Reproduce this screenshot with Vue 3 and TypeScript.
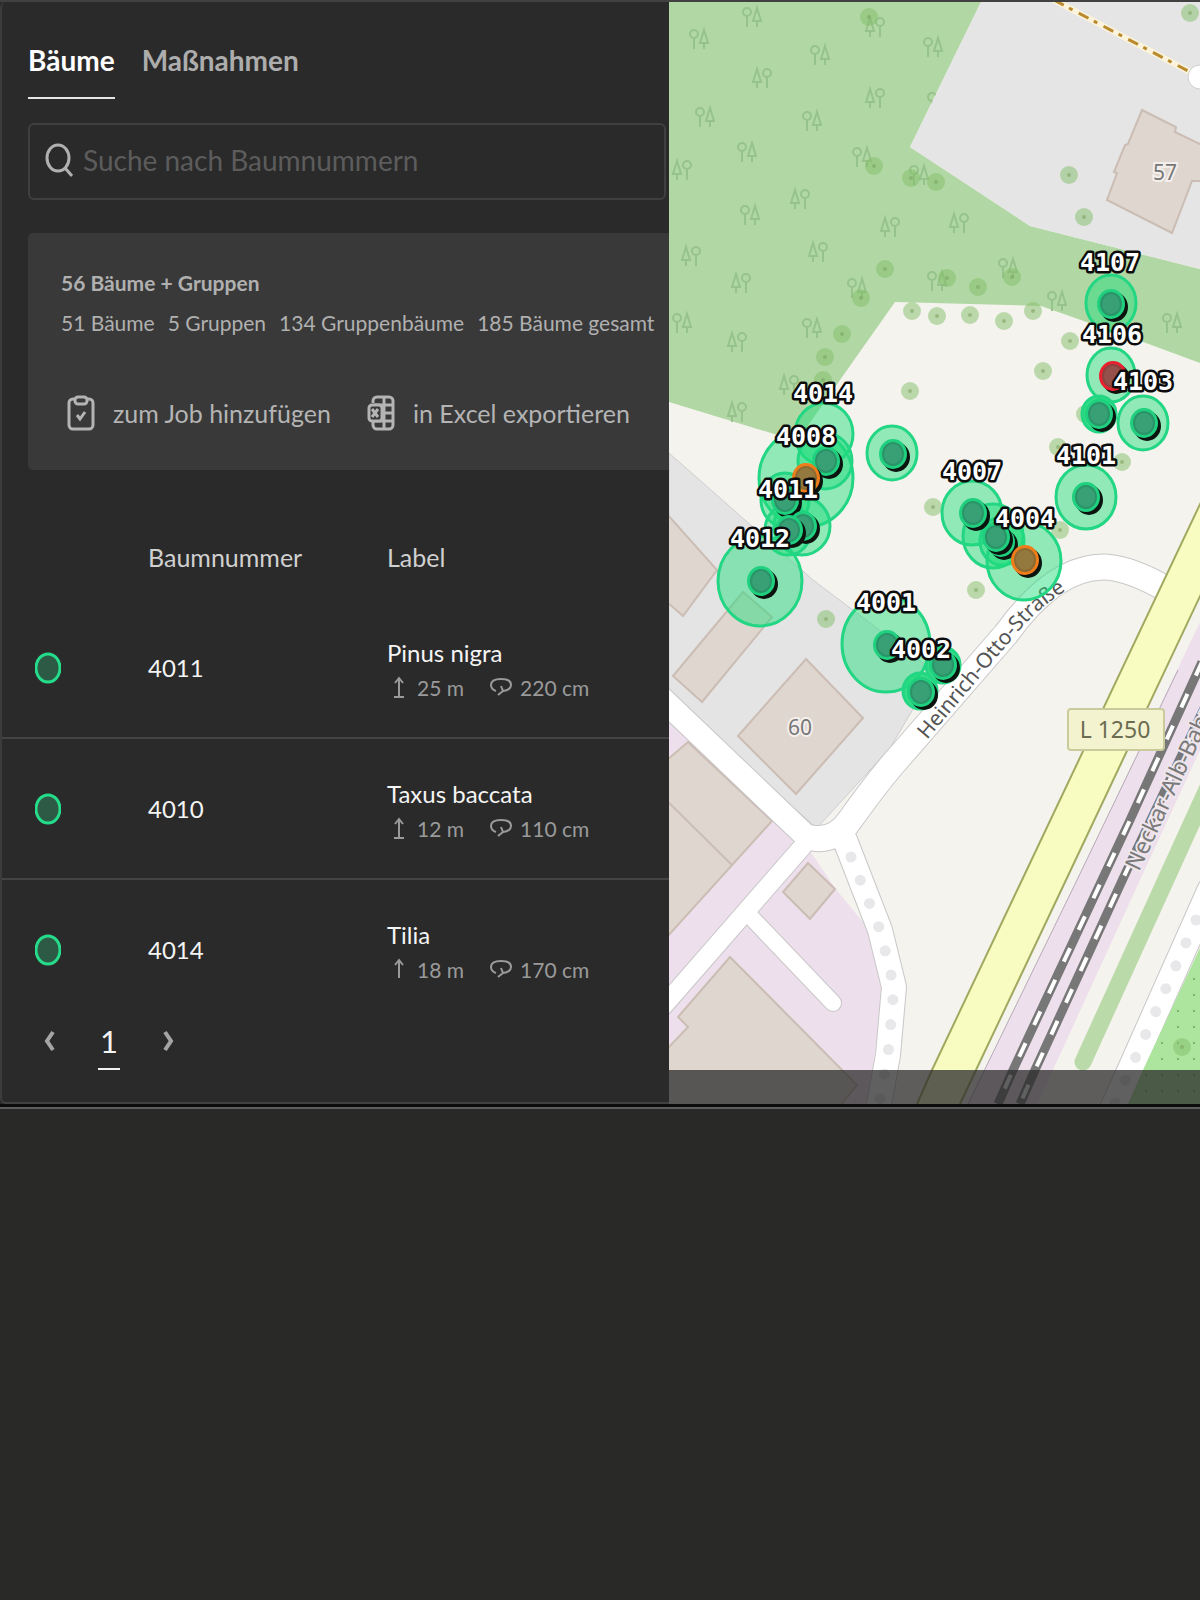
<script setup lang="ts">
import { ref } from 'vue'

interface TreeRow {
  nr: string
  label: string
  height: string
  girth: string
}

interface Crown {
  x: number
  y: number
  rx: number
  ry: number
}

const search = ref('')

const totals = ['51 Bäume', '5 Gruppen', '134 Gruppenbäume', '185 Bäume gesamt']

const rows: TreeRow[] = [
  { nr: '4011', label: 'Pinus nigra', height: '25 m', girth: '220 cm' },
  { nr: '4010', label: 'Taxus baccata', height: '12 m', girth: '110 cm' },
  { nr: '4014', label: 'Tilia', height: '18 m', girth: '170 cm' },
]

const crowns: Crown[] = [
  { x: 824, y: 434, rx: 29, ry: 31 },
  { x: 806, y: 478, rx: 47, ry: 49 },
  { x: 825, y: 461, rx: 27, ry: 28 },
  { x: 785, y: 500, rx: 24, ry: 27 },
  { x: 802, y: 526, rx: 28, ry: 29 },
  { x: 788, y: 530, rx: 23, ry: 25 },
  { x: 760, y: 581, rx: 42, ry: 45 },
  { x: 892, y: 453, rx: 25, ry: 27 },
  { x: 972, y: 513, rx: 30, ry: 32 },
  { x: 993, y: 536, rx: 30, ry: 32 },
  { x: 1002, y: 541, rx: 22, ry: 24 },
  { x: 1024, y: 561, rx: 37, ry: 39 },
  { x: 1086, y: 497, rx: 30, ry: 32 },
  { x: 1111, y: 375, rx: 24, ry: 27 },
  { x: 1143, y: 423, rx: 25, ry: 27 },
  { x: 1099, y: 414, rx: 17, ry: 18 },
  { x: 1111, y: 303, rx: 25, ry: 28 },
  { x: 886, y: 644, rx: 44, ry: 48 },
  { x: 943, y: 665, rx: 17, ry: 18 },
  { x: 920, y: 691, rx: 17, ry: 18 },
]

const trunks: [number, number, string][] = [
  [826, 461, 'ok'], [806, 478, 'warn'], [785, 500, 'ok'], [803, 526, 'ok'], [789, 530, 'ok'],
  [761, 581, 'ok'], [893, 454, 'ok'], [973, 513, 'ok'], [1001, 542, 'ok'], [996, 537, 'ok'],
  [1025, 560, 'warn'], [1086, 497, 'ok'], [1113, 376, 'danger'], [1144, 423, 'ok'],
  [1099, 414, 'ok'], [1111, 304, 'ok'], [887, 645, 'ok'], [943, 665, 'ok'], [921, 692, 'ok'],
]

const labels: [number, number, string][] = [
  [823, 402, '4014'], [806, 445, '4008'], [788, 498, '4011'], [760, 547, '4012'],
  [886, 611, '4001'], [921, 658, '4002'], [972, 480, '4007'], [1025, 527, '4004'],
  [1086, 464, '4101'], [1143, 390, '4103'], [1112, 343, '4106'], [1110, 271, '4107'],
]

const bushes: [number, number][] = [
  [869, 17], [1190, 13], [1069, 175], [1084, 217], [874, 166], [911, 178], [936, 182], [885, 269],
  [947, 278], [978, 287], [1012, 277], [861, 298], [842, 334], [825, 357], [823, 380], [912, 311],
  [937, 316], [970, 315], [1004, 321], [1033, 311], [1070, 341], [1043, 371], [910, 391],
  [1058, 447], [1122, 462], [1085, 414], [933, 507], [1060, 530], [976, 590], [826, 619],
  [1182, 1047],
]

const roundFirst: [number, number][] = [
  [752, 17], [699, 39], [933, 47], [820, 55], [705, 117], [812, 121], [747, 152], [862, 157],
  [919, 175], [750, 215], [857, 288], [937, 281], [1008, 268], [1057, 301], [682, 323],
  [812, 328], [1172, 323], [937, 102],
]

const coneFirst: [number, number][] = [
  [875, 27], [762, 78], [875, 98], [682, 170], [800, 199], [890, 227], [959, 223], [691, 256],
  [818, 252], [741, 283], [737, 342], [789, 385], [737, 412],
]
</script>

<template>
  <div class="page">
    <main class="frame">
      <section class="panel">
        <nav class="tabs">
          <a href="#baeume" class="tab active">Bäume</a>
          <a href="#massnahmen" class="tab">Maßnahmen</a>
        </nav>

        <label class="search">
          <svg class="search-icon" viewBox="0 0 28 34" aria-hidden="true">
            <ellipse cx="13" cy="15" rx="11" ry="13" />
            <path d="M20 25l7 8" />
          </svg>
          <input v-model="search" type="text" placeholder="Suche nach Baumnummern" aria-label="Suche nach Baumnummern" />
        </label>

        <div class="card">
          <p class="card-title">56 Bäume + Gruppen</p>
          <p class="totals">
            <span v-for="t in totals" :key="t">{{ t }}</span>
          </p>
          <div class="actions">
            <button type="button">
              <svg viewBox="0 0 28 36" aria-hidden="true">
                <path d="M8 4H6a4 4 0 0 0-4 4v22a4 4 0 0 0 4 4h16a4 4 0 0 0 4-4V8a4 4 0 0 0-4-4h-2" />
                <rect x="8" y="2" width="12" height="7" rx="3" />
                <path d="M10 20l3 4 5-7" />
              </svg>
              zum Job hinzufügen
            </button>
            <button type="button">
              <svg viewBox="0 0 28 36" aria-hidden="true">
                <path d="M6 8V6a4 4 0 0 1 4-4h12a4 4 0 0 1 4 4v24a4 4 0 0 1-4 4H10a4 4 0 0 1-4-4v-3" />
                <path d="M17 2v32M7 10h19M15 18h11M7 26h19" />
                <rect class="sheet" x="2" y="10" width="13" height="16" rx="3" />
                <path d="M5 14l6 8M11 14l-6 8" />
              </svg>
              in Excel exportieren
            </button>
          </div>
        </div>

        <div class="scroller">
          <table>
            <thead>
              <tr>
                <th class="state"></th>
                <th class="nr">Baumnummer</th>
                <th>Label</th>
              </tr>
            </thead>
            <tbody>
              <tr v-for="row in rows" :key="row.nr">
                <td class="state">
                  <svg class="dot" viewBox="0 0 26 32" aria-hidden="true">
                    <ellipse cx="13" cy="16" rx="12" ry="14" />
                  </svg>
                </td>
                <td class="nr">{{ row.nr }}</td>
                <td>
                  <div class="species">{{ row.label }}</div>
                  <div class="sizes">
                    <span class="size">
                      <svg class="arrow" viewBox="0 0 14 22" aria-hidden="true">
                        <path d="M7 20V2M3 7l4-5 4 5M2 21h10" />
                      </svg>
                      {{ row.height }}
                    </span>
                    <span class="size">
                      <svg class="girth" viewBox="0 0 22 20" aria-hidden="true">
                        <path d="M6 14C3 13 1 11 1 8c0-4 4-6 10-6s10 2 10 6c0 3-3 6-9 6" />
                        <path d="M11 9l2 5-5 4" />
                      </svg>
                      {{ row.girth }}
                    </span>
                  </div>
                </td>
              </tr>
            </tbody>
          </table>
        </div>

        <nav class="pager" aria-label="Seiten">
          <button type="button" aria-label="Zurück">
            <svg viewBox="0 0 12 22" aria-hidden="true"><path d="M9 2L3 11l6 9" /></svg>
          </button>
          <a href="#seite-1" class="current">1</a>
          <button type="button" aria-label="Weiter">
            <svg viewBox="0 0 12 22" aria-hidden="true"><path d="M3 2l6 9-6 9" /></svg>
          </button>
        </nav>
      </section>

      <section class="map">
        <svg viewBox="669 2 531 1102" preserveAspectRatio="xMidYMid slice" role="img" aria-label="Karte">
          <defs>
            <g id="round"><circle cx="0" cy="-5" r="4" /><path d="M0-1V10" /></g>
            <g id="cone"><path d="M0-9l-4 13h8zM0 4v6" /></g>
            <pattern id="meadow" x="1177" y="1010" width="16" height="16" patternUnits="userSpaceOnUse">
              <circle cx="1" cy="1" r="1" fill="#6ba560" />
            </pattern>
            <path id="street" d="M927 740L1012 639Q1035 610 1068 589" />
          </defs>

          <rect x="669" y="0" width="531" height="1104" fill="#f5f3ee" />

          <!-- wood -->
          <path fill="#b1d8a4" d="M669 0H982L910 147 1030 226 1200 269V363L1146 343 1041 306 895 302 797 441 669 402z" />
          <g class="wood">
            <g v-for="p in roundFirst" :key="`r${p}`" :transform="`translate(${p[0]} ${p[1]})`">
              <use href="#round" x="-5" /><use href="#cone" x="5" />
            </g>
            <g v-for="p in coneFirst" :key="`c${p}`" :transform="`translate(${p[0]} ${p[1]})`">
              <use href="#cone" x="-5" /><use href="#round" x="5" />
            </g>
          </g>

          <!-- yards -->
          <path fill="#e5e5e5" d="M982 0H1200V269L1030 226 910 147z" />
          <path fill="#e4e4e4" stroke="#cfcdd0" d="M669 453L813 580 935 672 890 748 817 828 669 700z" />
          <path fill="#eedfec" d="M669 700L808 848 835 888 867 927 883 990 873 1067 866 1104H669z" />

          <!-- footpath -->
          <path d="M1054 0L1190 72" fill="none" stroke="#fbf3dc" stroke-width="6" />
          <path d="M1054 0L1190 72" fill="none" stroke="#b98a2e" stroke-width="3" stroke-dasharray="11 6 4 7" />
          <circle cx="1200" cy="77" r="12" fill="#fff" stroke="#cfcfcf" />

          <!-- buildings -->
          <g fill="#dfd6cf" stroke="#cbbdb4" stroke-width="2">
            <path d="M1142 110L1176 127 1175 132 1206 147V181H1192L1172 233 1107 200 1117 173 1114 172 1125 145 1128 144z" />
            <path d="M667 514L717 570 683 616 667 602z" />
            <path d="M743 592L772 617 702 702 673 676z" />
            <path d="M806 659L863 718 796 794 738 736z" />
            <path d="M688 742L772 821 667 937V760z" />
            <path d="M667 801L732 865" />
            <path d="M808 863L835 889 810 919 783 892z" />
            <path d="M730 957L857 1085 840 1106H667V1049L688 1027 678 1017z" />
          </g>

          <!-- white roads: casing, then surface -->
          <g fill="none" stroke="#c9c7c9" stroke-linecap="round" stroke-linejoin="round">
            <path stroke-width="25" d="M655 692L808 838" />
            <path stroke-width="20" d="M803 846L660 1010" />
            <path stroke-width="18" d="M749 915L833 1003" />
            <path stroke-width="27" d="M812 838Q835 842 850 820 880 778 900 756L1006 634Q1055 566 1105 567 1130 568 1168 590" />
            <path stroke-width="26" d="M845 840L880 930 894 987 888 1055 878 1110" />
            <path stroke-width="27" d="M1210 890L1130 1070 1112 1110" />
          </g>
          <g fill="none" stroke="#fff" stroke-linecap="round" stroke-linejoin="round">
            <path stroke-width="23" d="M655 692L808 838" />
            <path stroke-width="18" d="M803 846L660 1010" />
            <path stroke-width="16" d="M749 915L833 1003" />
            <path stroke-width="25" d="M812 838Q835 842 850 820 880 778 900 756L1006 634Q1055 566 1105 567 1130 568 1168 590" />
            <path stroke-width="24" d="M845 840L880 930 894 987 888 1055 878 1110" />
            <path stroke-width="25" d="M1210 890L1130 1070 1112 1110" />
          </g>
          <g fill="none" stroke="#e8e8ea" stroke-width="11" stroke-linecap="round" stroke-dasharray="0 25">
            <path d="M851 857L880 930 894 987 888 1055 878 1110" />
            <path d="M1196 920L1130 1070 1112 1110" />
          </g>
          <path fill="#ade59f" d="M1200 948L1143 1070 1128 1104H1200z" />
          <path fill="url(#meadow)" d="M1200 953L1147 1070 1132 1104H1200z" />

          <!-- main road and railway -->
          <path fill="#eedfec" d="M1200 622L1077 880 968 1104H1037L1053 1070 1140 880 1200 750z" />
          <path fill="none" stroke="#b5a9b5" d="M1178 670L1077 880 968 1104" />
          <path fill="none" stroke="#bbdaaa" stroke-width="17" stroke-linecap="round" d="M1083 1062L1193 820 1215 772" />
          <path fill="#f8fcc1" d="M1202 500L1022 880 932 1070 917 1104H960L976 1070 1066 880 1202 592z" />
          <path fill="none" stroke="#a0a95f" stroke-width="2" d="M1202 500L1022 880 932 1070 917 1104M1202 592L1066 880 976 1070 960 1104" />
          <g fill="none">
            <g stroke="#777" stroke-width="9">
              <path d="M1202 662L1130 820 1013 1070 998 1104" />
              <path d="M1206 704L1127 870 1035 1070 1020 1104" />
            </g>
            <g stroke="#fff" stroke-width="4" stroke-dasharray="15 20">
              <path d="M1202 662L1130 820 1013 1070 998 1104" />
              <path d="M1206 704L1127 870 1035 1070 1020 1104" />
            </g>
          </g>

          <!-- single trees of the base map -->
          <g v-for="p in bushes" :key="`b${p}`">
            <circle :cx="p[0]" :cy="p[1]" r="9" fill="#82bd67" fill-opacity=".5" />
            <circle :cx="p[0]" :cy="p[1]" r="2" fill="#7ea565" fill-opacity=".6" />
          </g>

          <g class="place">
            <text x="1165" y="180" text-anchor="middle">57</text>
            <text x="800" y="735" text-anchor="middle">60</text>
          </g>
          <text class="road-name"><textPath href="#street">Heinrich-Otto-Straße</textPath></text>
          <text class="rail-name" transform="translate(1139 872) rotate(-65)">Neckar-Alb-Bahn</text>
          <rect x="1068" y="709" width="96" height="41" rx="3" fill="#f3f3cf" stroke="#c9cb9c" stroke-width="2" />
          <text class="shield" x="1115" y="738" text-anchor="middle">L 1250</text>

          <!-- recorded trees: crowns, trunks, numbers -->
          <ellipse
            v-for="(c, i) in crowns"
            :key="`m${i}`"
            :class="['crown', { small: c.rx < 20 }]"
            :cx="c.x" :cy="c.y" :rx="c.rx" :ry="c.ry"
          />
          <g v-for="(t, i) in trunks" :key="`t${i}`" :class="['trunk', t[2]]" :transform="`translate(${t[0]} ${t[1]})`">
            <ellipse class="shade" cx="3" cy="3" rx="14" ry="15" />
            <ellipse class="ring" rx="14" ry="15" />
            <ellipse class="core" rx="10" ry="11" />
          </g>
          <g class="numbers">
            <text v-for="l in labels" :key="l[2]" :x="l[0]" :y="l[1]" text-anchor="middle">{{ l[2] }}</text>
          </g>
        </svg>
        <div class="map-bar"></div>
      </section>
    </main>
    <div class="rule"></div>
  </div>
</template>

<style>
body {
  background: #292928;
}
</style>

<style scoped>
.page {
  font-family: Lato, 'Liberation Sans', sans-serif;
  font-size: 24px;
  color: #f4f4f4;
}

.frame {
  display: grid;
  grid-template-columns: minmax(0, 669fr) minmax(0, 531fr);
  border-top: 2px solid #414141;
  background: #2a2a2a;
}

.panel {
  display: flex;
  flex-direction: column;
  box-sizing: border-box;
  border-left: 2px solid #3c3c3c;
  border-bottom: 2px solid #414141;
  border-radius: 6px 0 0 6px;
  overflow: hidden;
}

.tabs {
  display: flex;
  gap: 27px;
  padding: 36px 26px 0;
}

.tab {
  height: 59px;
  border-bottom: 2px solid transparent;
  color: #adadad;
  font-size: 28px;
  font-weight: 700;
  line-height: 44px;
  text-decoration: none;
}

.tab.active {
  color: #fff;
  border-color: #e4e4e4;
}

.search {
  display: flex;
  align-items: center;
  gap: 10px;
  box-sizing: border-box;
  height: 77px;
  margin: 24px 3px 0 26px;
  padding: 0 15px 3px;
  border: 2px solid #3f3f3f;
  border-radius: 6px;
}

.search-icon {
  flex: none;
  width: 28px;
  height: 34px;
  fill: none;
  stroke: #b0b0b0;
  stroke-width: 3;
}

.search input {
  flex: 1;
  min-width: 0;
  padding: 0;
  border: 0;
  outline: 0;
  background: none;
  color: #fff;
  font: inherit;
  font-size: 28px;
}

.search input::placeholder {
  color: #5c5c5c;
  opacity: 1;
}

.card {
  margin: 33px 0 0 26px;
  padding: 30px 0 0 33px;
  height: 207px;
  border-radius: 5px 0 0 5px;
  background: #393939;
  color: #b0b0b0;
  font-size: 21px;
}

.card p {
  margin: 0;
  line-height: 40px;
  white-space: nowrap;
}

.card-title {
  font-weight: 700;
}

.totals {
  display: flex;
  gap: 13px;
}

.actions {
  display: flex;
  gap: 36px;
  margin-top: 50px;
  padding-left: 6px;
}

.actions button {
  display: flex;
  align-items: center;
  gap: 18px;
  padding: 0;
  border: 0;
  background: none;
  color: #b4b4b4;
  font: inherit;
  font-size: 25px;
  line-height: 40px;
  white-space: nowrap;
}

.actions svg {
  width: 28px;
  height: 36px;
  fill: none;
  stroke: #b4b4b4;
  stroke-width: 3;
}

.actions .sheet {
  fill: #393939;
}

.scroller {
  max-height: 458px;
  margin-top: 50px;
  overflow: hidden;
}

table {
  width: 100%;
  border-collapse: separate;
  border-spacing: 0;
  table-layout: fixed;
}

th {
  height: 74px;
  padding: 0 0 4px;
  color: #d0d0d0;
  font-size: 25px;
  font-weight: 400;
  text-align: left;
}

td {
  height: 139px;
  padding: 0;
  border-bottom: 2px solid #444;
}

.state {
  width: 146px;
}

.nr {
  width: 239px;
}

.dot {
  display: block;
  width: 26px;
  height: 32px;
  margin-left: 33px;
}

.dot ellipse {
  fill: #2c5a45;
  stroke: #25dc8a;
  stroke-width: 3;
}

.species,
.size {
  line-height: 35px;
}

.species {
  padding-top: 4px;
}

.sizes {
  display: flex;
  gap: 26px;
  color: #9a9a9a;
  font-size: 21px;
}

.size {
  display: flex;
  align-items: center;
  gap: 8px;
}

.size svg {
  fill: none;
  stroke: #9a9a9a;
  stroke-width: 2;
}

.arrow {
  width: 14px;
  height: 22px;
  margin: 0 3px 0 5px;
}

.girth {
  width: 22px;
  height: 20px;
}

.pager {
  display: flex;
  align-items: flex-start;
  gap: 42px;
  padding: 40px 42px 32px;
}

.pager button {
  padding: 12px 0 0;
  border: 0;
  background: none;
}

.pager svg {
  display: block;
  width: 12px;
  height: 22px;
  fill: none;
  stroke: #a5a5a5;
  stroke-width: 4;
}

.current {
  width: 22px;
  height: 50px;
  border-bottom: 2px solid #f0f0f0;
  color: #f4f4f4;
  font-size: 31px;
  line-height: 46px;
  text-align: center;
  text-decoration: none;
}

.map {
  position: relative;
  overflow: hidden;
}

.map > svg {
  display: block;
  width: 100%;
  height: 100%;
}

.map-bar {
  position: absolute;
  right: 0;
  bottom: 0;
  left: 0;
  height: 34px;
  background: rgba(41, 41, 40, 0.74);
}

.wood {
  fill: none;
  stroke: #96c28b;
  stroke-width: 2;
}

.place {
  fill: #777;
  stroke: #f4efec;
  stroke-width: 4;
  paint-order: stroke;
  font: 21px 'Noto Sans', sans-serif;
}

.road-name {
  fill: #555;
  stroke: #fff;
  stroke-width: 2;
  paint-order: stroke;
  font: 21px 'Noto Sans', sans-serif;
}

.rail-name {
  fill: #7a7a7a;
  stroke: #eee6ec;
  stroke-width: 4;
  paint-order: stroke;
  font: 23px 'Noto Sans', sans-serif;
}

.shield {
  fill: #6c6c52;
  font: 23px 'Noto Sans', sans-serif;
}

.crown {
  fill: #20dc7c;
  fill-opacity: 0.47;
  stroke: #22d683;
  stroke-width: 3;
}

.crown.small {
  fill-opacity: 0.9;
}

.trunk .shade {
  fill: #0c1410;
}

.trunk .ring {
  fill: #1fd07f;
}

.trunk .core {
  fill: #39a075;
  stroke: #2a9468;
  stroke-width: 2;
}

.trunk.warn .ring {
  fill: #ee7d1a;
}

.trunk.warn .core {
  fill: #94793f;
  stroke: #8c6a30;
}

.trunk.danger .ring {
  fill: #e8202f;
}

.trunk.danger .core {
  fill: #94514b;
  stroke: #8a4440;
}

.numbers {
  fill: #fff;
  stroke: #0c0c0c;
  stroke-width: 5;
  stroke-linejoin: round;
  paint-order: stroke;
  font: 700 25px 'DejaVu Sans Mono', monospace;
}

.rule {
  height: 3px;
  border-bottom: 2px solid #5e5e5e;
  background: #0c0c0c;
}
</style>
